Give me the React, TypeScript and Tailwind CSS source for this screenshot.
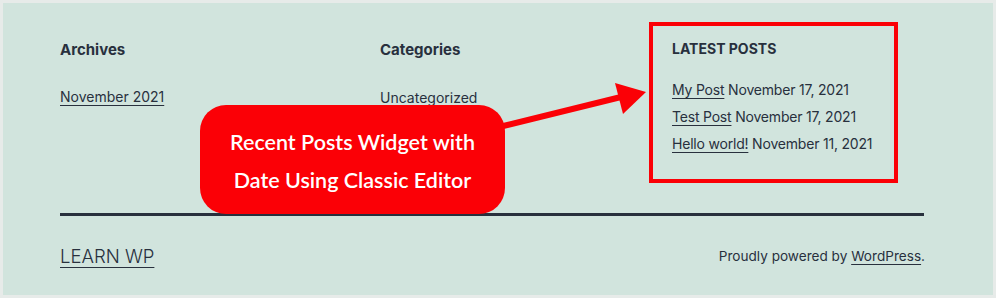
import React from "react";

// footer widgets ของธีม Twenty Twenty-One + callout สีแดงทับด้านบน
const posts = [
  { title: "My Post", date: "November 17, 2021" },
  { title: "Test Post", date: "November 17, 2021" },
  { title: "Hello world!", date: "November 11, 2021" },
];

function Callout() {
  return (
    <div className="absolute left-[197px] top-[102px] flex h-[109px] w-[305px] flex-col items-center justify-center gap-[10px] rounded-[26px] bg-[#fb0006] pt-[3px] text-[21.5px] leading-[28px] text-white [font-family:Lato,'Open_Sans',sans-serif] font-semibold">
      <span>Recent Posts Widget with</span>
      <span>Date Using Classic Editor</span>
    </div>
  );
}

function Arrow() {
  return (
    <svg
      className="pointer-events-none absolute left-0 top-0"
      width="996"
      height="298"
      viewBox="0 0 996 298"
    >
      <line x1="496" y1="124" x2="618" y2="94" stroke="#fb0006" strokeWidth="6" />
      <polygon points="612,80 643,89 620,111" fill="#fb0006" />
    </svg>
  );
}

export default function App() {
  return (
    <div className="relative h-[298px] w-[996px] overflow-hidden border-[3px] border-[#e7ebe9] bg-[#d1e4dd] text-[#28303d] [font-family:Inter,'Liberation_Sans',sans-serif]">
      <div className="flex pl-[57px] pt-[19px]">
        <div className="w-[320px] pt-[16px]">
          <h2 className="text-[15px] font-bold leading-[24px]">Archives</h2>
          <a className="mt-[23px] block text-[14px] leading-[24px] underline decoration-1 underline-offset-[3px]">
            November 2021
          </a>
        </div>
        <div className="w-[269px] pt-[16px]">
          <h2 className="text-[15px] font-bold leading-[24px]">Categories</h2>
          <a className="mt-[24px] block text-[14px] leading-[24px] underline decoration-1 underline-offset-[3px]">
            Uncategorized
          </a>
        </div>
        <div className="h-[161px] w-[249px] border-4 border-[#fb0006] pl-[19px] pt-[11px]">
          <h2 className="text-[14px] font-bold uppercase leading-[24px]">Latest Posts</h2>
          <ul className="mt-[17px] flex flex-col gap-[3px] text-[14px] leading-[24px] tracking-[-0.2px]">
            {posts.map((p) => (
              <li key={p.title}>
                <a className="underline decoration-1 underline-offset-[3px]">{p.title}</a>{" "}
                {p.date}
              </li>
            ))}
          </ul>
        </div>
      </div>

      <div className="mx-[57px] mt-[30px] h-[3px] w-[864px] bg-[#28303d]" />

      <div className="flex items-center justify-between pl-[57px] pr-[68px] pt-[26px]">
        <a className="text-[18.5px] font-light leading-[28px] underline decoration-1 underline-offset-[4px]">
          LEARN WP
        </a>
        <p className="text-[13.6px] leading-[24px]">
          Proudly powered by{" "}
          <a className="underline decoration-1 underline-offset-[3px]">WordPress</a>.
        </p>
      </div>

      <Arrow />
      <Callout />
    </div>
  );
}
